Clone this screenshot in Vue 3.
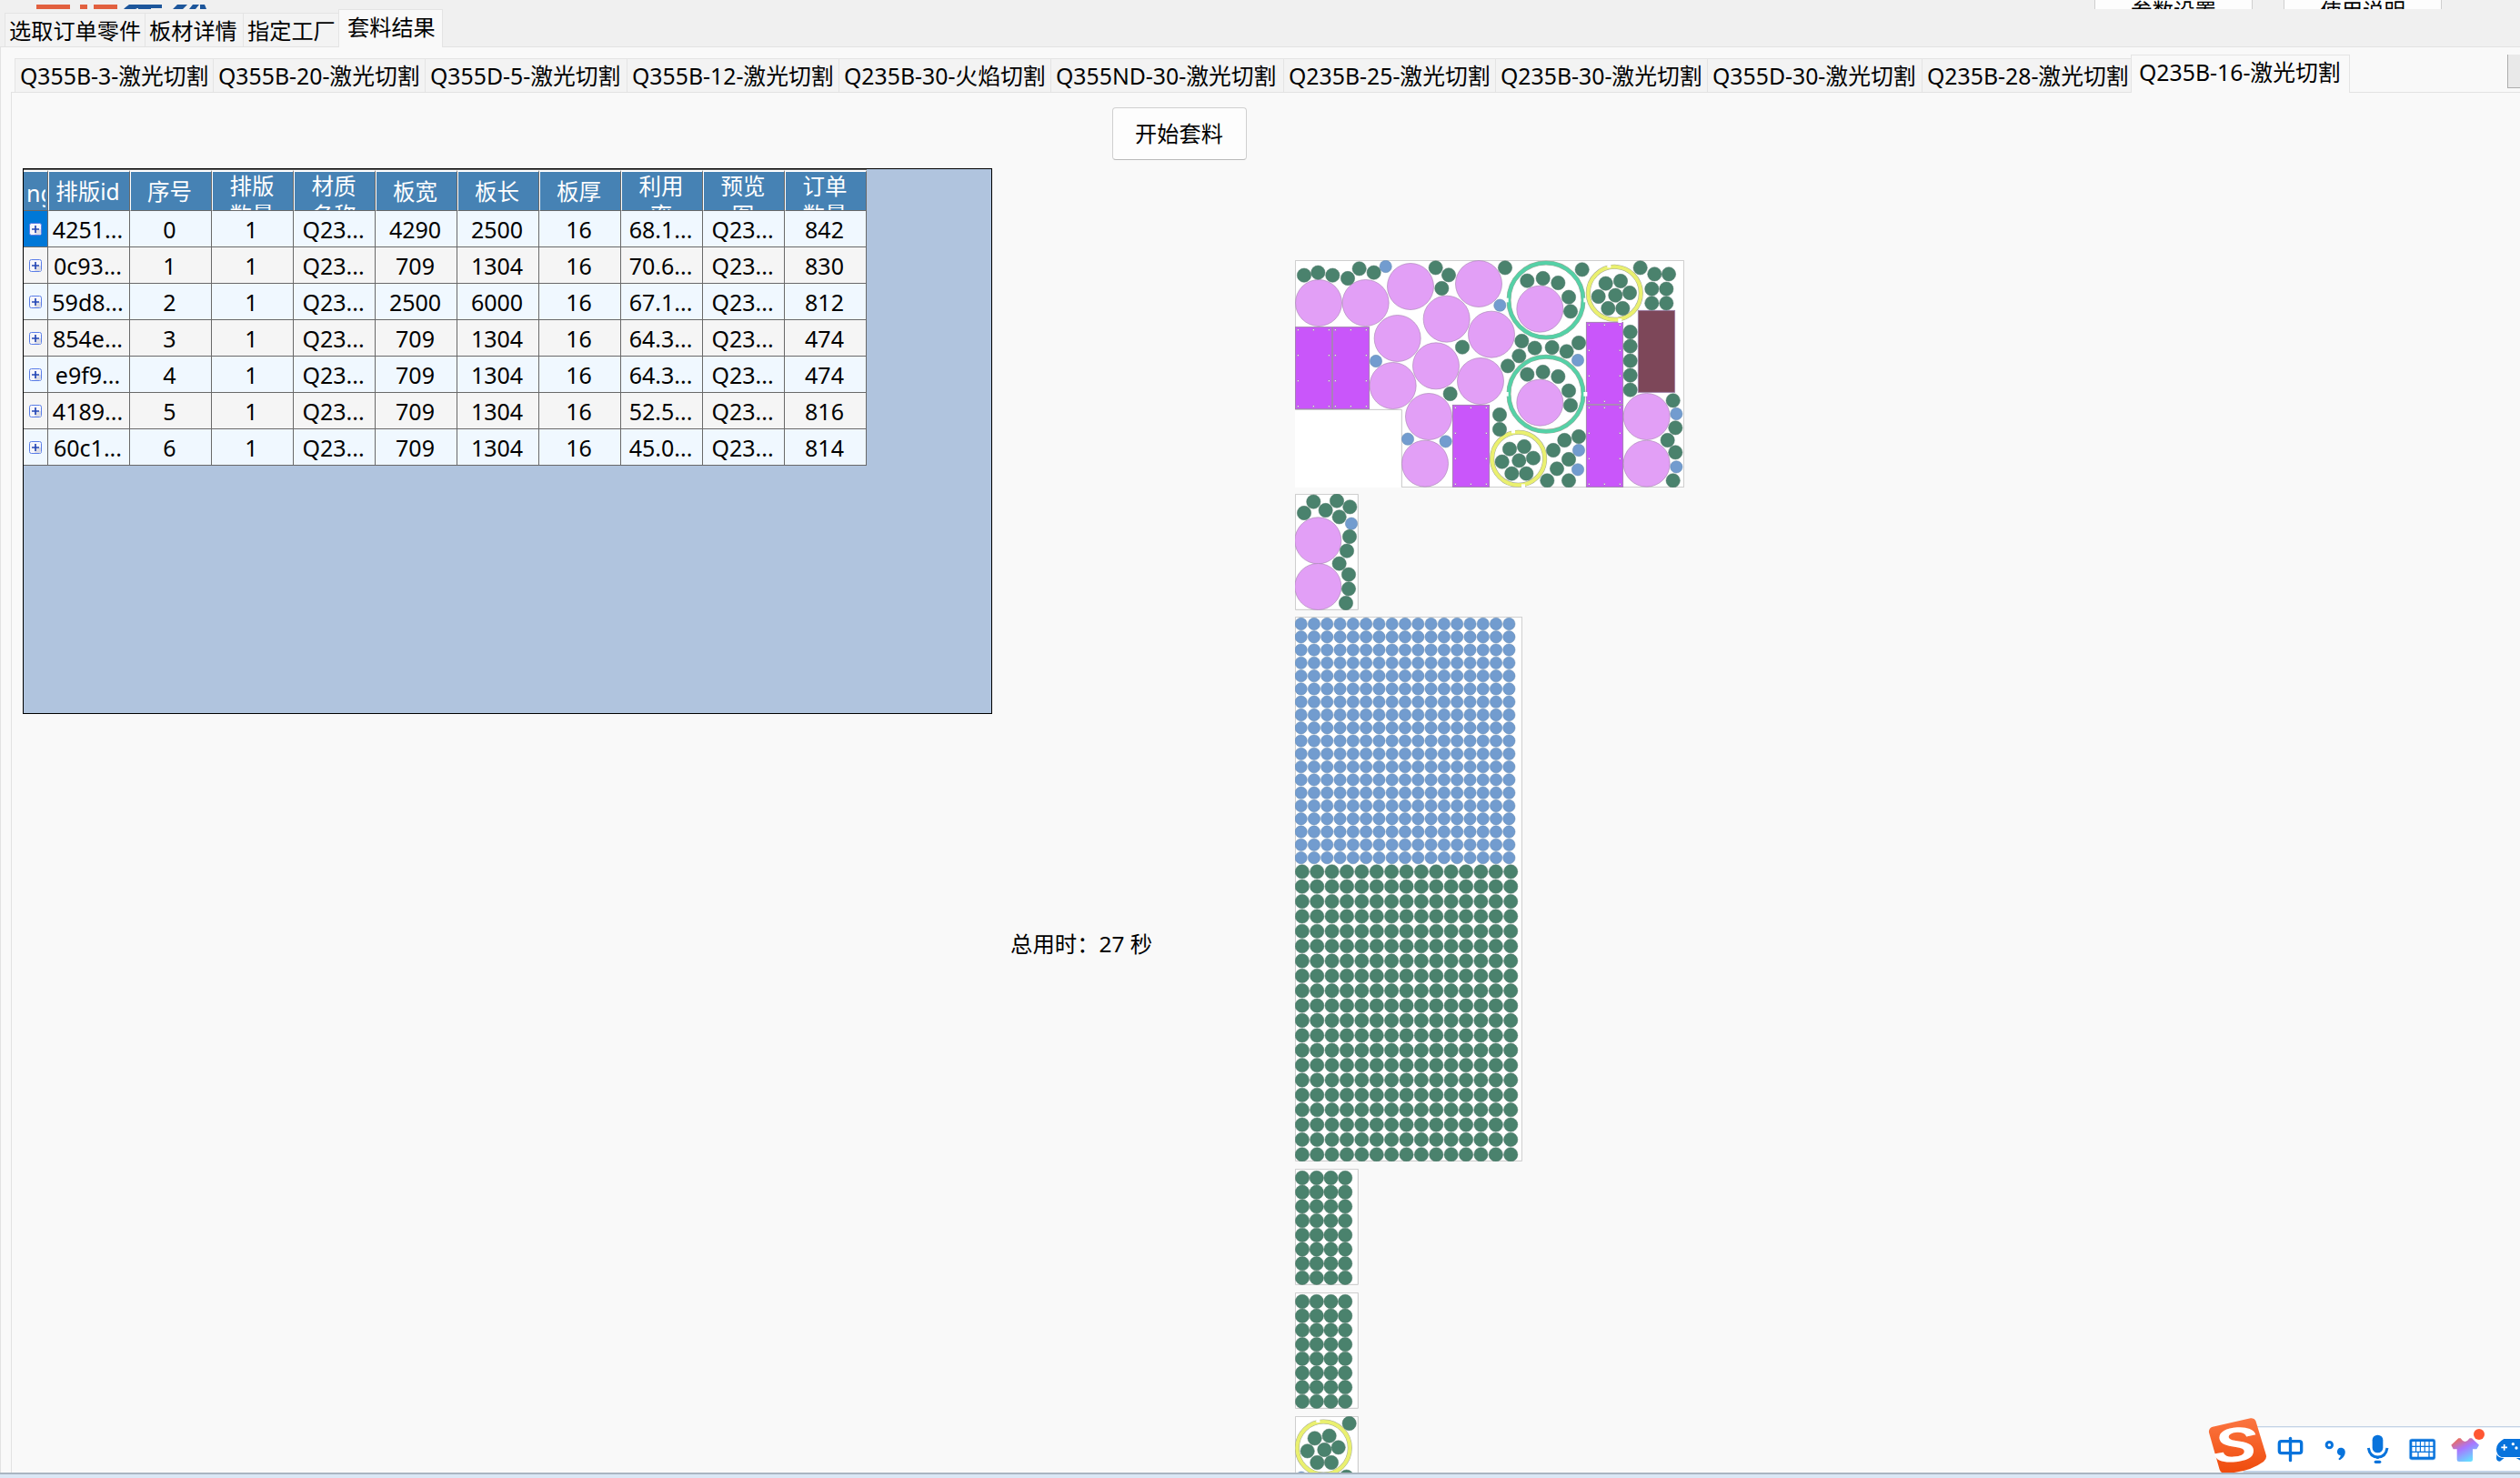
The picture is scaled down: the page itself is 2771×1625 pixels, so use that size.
<script setup>
const mainTabs = [
  { label: '选取订单零件', width: 154 },
  { label: '板材详情', width: 108 },
  { label: '指定工厂', width: 105 },
  { label: '套料结果', width: 115, active: true },
]

const materialTabs = [
  { label: 'Q355B-3-激光切割', width: 218 },
  { label: 'Q355B-20-激光切割', width: 233 },
  { label: 'Q355D-5-激光切割', width: 222 },
  { label: 'Q355B-12-激光切割', width: 233 },
  { label: 'Q235B-30-火焰切割', width: 233 },
  { label: 'Q355ND-30-激光切割', width: 256 },
  { label: 'Q235B-25-激光切割', width: 233 },
  { label: 'Q235B-30-激光切割', width: 233 },
  { label: 'Q355D-30-激光切割', width: 236 },
  { label: 'Q235B-28-激光切割', width: 230 },
  { label: 'Q235B-16-激光切割', width: 241, active: true },
]

const headers = ['排版id', '序号', '排版数量', '材质名称', '板宽', '板长', '板厚', '利用率', '预览图', '订单数量']
const rows = [
  ['4251...', '0', '1', 'Q23...', '4290', '2500', '16', '68.1...', 'Q23...', '842'],
  ['0c93...', '1', '1', 'Q23...', '709', '1304', '16', '70.6...', 'Q23...', '830'],
  ['59d8...', '2', '1', 'Q23...', '2500', '6000', '16', '67.1...', 'Q23...', '812'],
  ['854e...', '3', '1', 'Q23...', '709', '1304', '16', '64.3...', 'Q23...', '474'],
  ['e9f9...', '4', '1', 'Q23...', '709', '1304', '16', '64.3...', 'Q23...', '474'],
  ['4189...', '5', '1', 'Q23...', '709', '1304', '16', '52.5...', 'Q23...', '816'],
  ['60c1...', '6', '1', 'Q23...', '709', '1304', '16', '45.0...', 'Q23...', '814'],
]

// Part geometry is stored in plate units, three units to a pixel.
const shift = (points, dx, dy) => points.map(([x, y]) => [x + dx, y + dy])

function grid(cols, count, x0, y0, dx, dy) {
  const points = []
  for (let r = 0; r < count; r++) {
    for (let c = 0; c < cols; c++) points.push([x0 + c * dx, y0 + r * dy])
  }
  return points
}

const block = (height) => ({
  w: 209, h: height, outline: `1,1 208,1 208,${height - 2} 1,${height - 2}`,
  green: grid(4, 8, 24, 30, 47.2, 47.1), blue: [], pink: [], rings: [], sheets: [],
})

const plates = [
  {
    w: 1284, h: 750,
    outline: '1,1 1283,1 1283,749 352,749 352,493 1,493',
    green: [
      ...shift([[72, 83], [118, 74], [166, 83], [216, 93], [254, 61], [302, 74], [506, 58], [549, 82], [526, 126], [594, 320], [554, 474]], -42, -33),
      ...shift([
        [75, 58], [148, 101], [200, 93], [250, 108], [285, 155], [291, 202], [329, 64], [521, 58],
        [568, 79], [615, 79], [559, 128], [607, 128], [559, 175], [607, 175],
        [407, 110], [456, 102], [383, 153], [439, 149], [486, 141], [415, 192], [463, 192],
        [130, 300], [173, 323], [230, 321], [278, 334], [318, 306], [121, 349], [84, 382],
        [148, 410], [200, 402], [250, 417], [285, 464], [291, 512],
        [488, 270], [488, 317], [488, 365], [488, 413], [488, 461],
        [57, 543], [57, 591], [90, 656], [138, 648], [65, 698], [121, 694], [168, 686], [97, 737], [145, 737],
        [234, 660], [271, 627], [318, 615], [285, 690], [246, 721], [214, 760], [285, 760],
        [629, 496], [637, 586], [611, 627], [637, 667], [629, 760],
      ], 618, -33),
    ],
    blue: [
      ...shift([[341, 54], [309, 366], [414, 623], [539, 631]], -42, -33),
      ...shift([[58, 182], [315, 363], [318, 660], [315, 724], [640, 540], [640, 715]], 618, -33),
    ],
    pink: [
      ...shift([[120, 174], [275, 174], [423, 120], [648, 111], [542, 227], [380, 291], [690, 278], [507, 382], [365, 447], [654, 432], [483, 549], [471, 704]], -42, -33),
      ...shift([[190, 194], [190, 503], [542, 549], [542, 704]], 618, -33),
    ],
    rings: [
      { x: 828, y: 132, r: 123, color: '#55d1a7', cuts: [[-130, 0], [130, 0]] },
      { x: 828, y: 442, r: 123, color: '#55d1a7', cuts: [[-130, 0], [130, 0]] },
      { x: 1054, y: 109, r: 87, color: '#eaf06f', cuts: [[-18, -91], [18, 91]] },
      { x: 737, y: 655, r: 87, color: '#eaf06f', cuts: [[-17, -91], [16, 91]] },
    ],
    sheets: [
      { x: 1, y: 221 }, { x: 124, y: 221 }, { x: 520, y: 478 },
      { x: 961, y: 205 }, { x: 961, y: 478 }, { x: 1132, y: 166, plain: true },
    ],
  },
  {
    w: 209, h: 384, outline: '1,1 208,1 208,382 1,382',
    green: shift([[72, 88], [103, 51], [143, 79], [180, 48], [223, 68], [188, 101], [222, 166], [213, 213], [188, 255], [219, 291], [219, 338], [210, 385]], -42, -25),
    blue: [[186, 98]], pink: [[76, 154], [76, 306]], rings: [], sheets: [],
  },
  {
    w: 750, h: 1797, outline: '1,1 749,1 749,1795 1,1795',
    green: grid(15, 20, 23.5, 841, 49.15, 49.1),
    blue: grid(17, 19, 20, 24, 42.88, 42.85), pink: [], rings: [], sheets: [],
  },
  block(384),
  block(384),
  {
    w: 209, h: 384, outline: '1,1 208,1 208,382 1,382',
    green: shift([[221, 555], [107, 604], [155, 596], [83, 646], [139, 642], [185, 634], [115, 684], [162, 684], [212, 731]], -42, -531),
    blue: [[21, 203]], pink: [],
    rings: [{ x: 94, y: 105, r: 87, color: '#eaf06f', cuts: [[-18, -91]] }], sheets: [],
  },
]

const holes = [[9, 9], [60, 9], [111, 9], [9, 93], [111, 93], [9, 177], [111, 177], [9, 261], [60, 261], [111, 261]]
</script>

<template>
  <div class="window">
    <header class="topbar">
      <svg class="brand" width="200" height="5" viewBox="0 0 200 5">
        <g fill="#e2603f">
          <rect x="0" width="37" height="5" /><rect x="48" width="8" height="5" /><rect x="63" width="26" height="5" />
        </g>
        <g fill="#1d569b">
          <path d="M102 0h36v4h-27l-2 1h-13l2-2z" /><rect x="112" y="3" width="14" height="2" />
          <path d="M155 0h11l-5 5h-11zM172 0h7l-4 5h-7zM180 0h5l2 5h-7z" />
        </g>
      </svg>
      <div class="tools"><div class="tool">参数设置</div><div class="tool">使用说明</div></div>
    </header>

    <nav class="tabs main-tabs">
      <div v-for="t in mainTabs" :key="t.label" class="tab" :class="{ active: t.active }" :style="{ width: t.width + 'px' }">{{ t.label }}</div>
    </nav>

    <section class="page">
      <nav class="tabs material-tabs">
        <div v-for="t in materialTabs" :key="t.label" class="tab" :class="{ active: t.active }" :style="{ width: t.width + 'px' }">{{ t.label }}</div>
        <div class="scroller"></div>
      </nav>

      <div class="content">
        <div class="left">
          <button class="start">开始套料</button>
          <div class="datagrid">
            <div class="row head">
              <div class="expander"><span>ng</span></div>
              <div v-for="h in headers" :key="h" class="cell" :class="{ tall: h.length > 2 && h !== '排版id' }"><span>{{ h }}</span></div>
            </div>
            <div v-for="(r, i) in rows" :key="i" class="row" :class="{ odd: i % 2 }">
              <div class="expander" :class="{ selected: i === 0 }">
                <svg width="14" height="14" viewBox="0 0 14 14">
                  <rect x=".5" y=".5" width="13" height="13" rx="2" fill="#f6f6fb" stroke="#5b7ee8" />
                  <path d="M8 7h5v6H6z" fill="#dcdce4" /><path d="M3 7h8M7 3v8" stroke="#2547b5" stroke-width="1.7" />
                </svg>
              </div>
              <div v-for="(v, c) in r" :key="c" class="cell">{{ v }}</div>
            </div>
          </div>
          <div class="elapsed">总用时：27 秒</div>
        </div>

        <div class="plates">
          <svg v-for="(p, i) in plates" :key="i" :width="p.w / 3" :height="p.h / 3" :viewBox="`0 0 ${p.w} ${p.h}`">
            <rect :width="p.w" :height="p.h" fill="#fff" />
            <polygon :points="p.outline" fill="none" stroke="#c6c6c6" stroke-width="3" />
            <g v-for="(s, k) in p.sheets" :key="'s' + k" :transform="`translate(${s.x} ${s.y})`">
              <rect width="121" height="270" :fill="s.plain ? '#7d4759' : '#c956fa'" stroke="#9a7ba6" stroke-width="2.5" />
              <template v-if="!s.plain">
                <circle v-for="(h, n) in holes" :key="n" :cx="h[0]" :cy="h[1]" r="3" fill="#fff" stroke="#8a5aa5" stroke-width="1.5" />
              </template>
            </g>
            <g v-for="(r, k) in p.rings" :key="'r' + k">
              <circle :cx="r.x" :cy="r.y" :r="r.r" fill="none" stroke="#a3a89a" stroke-width="15" />
              <circle :cx="r.x" :cy="r.y" :r="r.r" fill="none" :stroke="r.color" stroke-width="12" />
              <rect v-for="(c, n) in r.cuts" :key="n" :x="r.x + c[0] - 6" :y="r.y + c[1] - 7" width="12" height="14" fill="#fff" />
            </g>
            <circle v-for="(c, k) in p.pink" :key="'p' + k" class="pink" :cx="c[0]" :cy="c[1]" r="76.5" />
            <circle v-for="(c, k) in p.blue" :key="'b' + k" class="blue" :cx="c[0]" :cy="c[1]" r="20" />
            <circle v-for="(c, k) in p.green" :key="'g' + k" class="green" :cx="c[0]" :cy="c[1]" r="23" />
          </svg>
        </div>
      </div>
    </section>

    <footer class="desktop-edge"></footer>

    <svg class="ime" width="371" height="79" viewBox="0 0 1113 237">
      <defs>
        <linearGradient id="badge" x1="0" y1="0" x2="0" y2="1"><stop offset="0" stop-color="#fb7541" /><stop offset="1" stop-color="#ef4b0c" /></linearGradient>
        <linearGradient id="shirt" x1="0" y1="0" x2=".6" y2="1"><stop offset="0" stop-color="#ff6a2b" /><stop offset=".5" stop-color="#a876ff" /><stop offset="1" stop-color="#67dcff" /></linearGradient>
      </defs>
      <rect x="200" y="84" width="920" height="153" fill="#c3d3e6" />
      <rect x="200" y="88" width="920" height="143" fill="#fff" />
      <path d="M99 86L224 58q12-2 17 8l34 112q4 14-8 23q-50 37-129 38q-12 0-16-12L87 105q-2-14 12-19z" fill="url(#badge)" />
      <text transform="translate(103 204) rotate(-3) scale(1.36 1)" font-size="160" class="badge-letter" fill="#fff">S</text>
      <g fill="none" stroke="#0873dc" stroke-width="10">
        <rect x="319" y="134" width="73" height="39" rx="7" /><path d="M355.500 124v73" stroke-linecap="round" />
        <circle cx="484" cy="146" r="9.500" stroke-width="9" />
        <path d="M613 156q5 30 31 30t31-30M643 186v6" stroke-width="9" />
        <path d="M637 202h13" stroke-linecap="round" />
      </g>
      <path d="M522 155c20 0 20 30-5 41l-3-4q8-6 7-12c-15 0-15-25 1-25z" fill="#0873dc" />
      <rect x="626" y="113" width="35" height="59" rx="17" fill="#0873dc" />
      <rect x="748" y="126" width="86" height="69" rx="8" fill="#0873dc" stroke="#8ec1f1" stroke-width="2" />
      <g fill="#fff">
        <rect v-for="n in 10" :key="n" :x="757 + ((n - 1) % 5) * 14.500" :y="135 + Math.floor((n - 1) / 5) * 18" width="11" height="14" />
        <rect x="757" y="171" width="18" height="14" /><rect x="779" y="171" width="32" height="14" /><rect x="815" y="171" width="11" height="14" />
      </g>
      <path d="M886 146l24-22h7q14 22 30 0h7l24 22-8 14h-13v35q0 6-7 6h-38q-7 0-7-6v-35h-12z" fill="url(#shirt)" />
      <circle cx="978" cy="111" r="18" fill="#ff5733" />
      <path d="M1060 126h70v60h-78q-17-6-17-26t25-34z" fill="#0873dc" />
      <path d="M1036 177q5 12 25 12l-14 11q-12 0-12-12zM1100 189h20v12z" fill="#0873dc" />
      <path d="M1051 154h20M1061 144v20" stroke="#fff" stroke-width="5" /><circle cx="1090" cy="143" r="5" fill="#fff" /><circle cx="1101" cy="156" r="5" fill="#fff" />
    </svg>
  </div>
</template>

<style>
body { margin: 0; }
</style>

<style scoped>
* { box-sizing: border-box; }
.window {
  position: relative;
  display: flex;
  flex-direction: column;
  width: 2771px;
  height: 1625px;
  overflow: hidden;
  background: #f0f0f0;
  color: #000;
  font: 24.8px/32px "Noto Sans", "Noto Sans CJK SC", sans-serif;
}
.topbar {
  display: flex;
  justify-content: space-between;
  height: 10px;
  flex: none;
  overflow: hidden;
  padding: 0 86px 0 40px;
}
.brand { margin-top: 5px; }
.tools { display: flex; gap: 34px; }
.tool {
  width: 174px;
  height: 40px;
  border: solid #cfcfcf;
  border-width: 0 1px;
  background: #fdfdfd;
  text-align: center;
  font-size: 23.5px;
  line-height: 25px;
}
.tabs { display: flex; align-items: flex-end; flex: none; }
.tab {
  flex: none;
  height: 37px;
  padding-left: 6px;
  border: 1px solid #e4e4e4;
  border-width: 1px 0 0 1px;
  background: #f3f3f3;
  white-space: nowrap;
}
.tab.active { background: #f9f9f9; border-right-width: 1px; padding-left: 9px; }
.main-tabs { height: 41px; padding-left: 5px; }
.main-tabs .tab { padding-left: 4px; line-height: 37px; font-size: 24.2px; }
.main-tabs .tab.active { height: 42px; margin-bottom: -1px; padding-left: 9px; z-index: 1; }
.page {
  display: flex;
  flex-direction: column;
  height: 1568px;
  border: 1px solid #e2e2e2;
  border-width: 1px 0 0 1px;
  background: #f9f9f9;
}
.material-tabs { height: 49px; padding-left: 15px; }
.material-tabs .tab { padding-left: 5px; line-height: 37px; }
.material-tabs .tab.active { height: 42px; margin-bottom: -1px; padding-left: 8px; z-index: 1; }
.scroller {
  width: 14px;
  height: 37px;
  margin: 0 0 4px auto;
  border: solid #adadad;
  border-width: 0 0 1px 1px;
  background: #e9e9e9;
}
.content {
  display: flex;
  flex: 1;
  margin-left: 11px;
  border: 1px solid #e2e2e2;
  border-width: 1px 0 0 1px;
  min-height: 0;
  overflow: hidden;
}
.left { display: flex; flex-direction: column; width: 1411px; flex: none; }
.start {
  width: 148px;
  height: 58px;
  margin: 16px 0 0 1210px;
  padding: 0 1px 0 0;
  border: 1px solid #d0d0d0;
  border-bottom-color: #b9b9b9;
  border-radius: 4px;
  background: #fdfdfd;
  color: #000;
  font: inherit;
  font-size: 24.2px;
}
.datagrid {
  width: 1066px;
  height: 600px;
  margin: 9px 0 0 12px;
  border: 1px solid #000;
  background: #b0c4de;
  font-size: 25px;
}
.row { display: flex; width: 927px; height: 40px; background: #f0f8ff; }
.row.odd { background: #f5f5f5; }
.cell, .expander { border: solid #696969; border-width: 0 1px 1px 0; overflow: hidden; }
.cell { width: 90px; padding-right: 2px; text-align: center; line-height: 40px; }
.expander { display: flex; align-items: center; justify-content: center; width: 27px; padding-right: 1px; }
.expander.selected { background: #0078d7; }
.row.head { height: 46px; border-top: 1px solid #696969; background: #4682b4; color: #fff; }
.head .cell { border-left: 1px solid #fff; border-top: 2px solid #fff; padding-right: 3px; line-height: 44px; font-size: 24.500px; }
.head .cell span { display: block; }
.head .tall { padding: 0 20px 0 18px; line-height: 32px; }
.head .tall span { margin: 0 -1px; word-break: break-all; }
.head .expander { justify-content: flex-start; border-top: 2px solid #fff; padding: 3px 2px 0 3px; }
.head .expander span { overflow: hidden; }
.elapsed { margin: 237px 0 0 1098px; font-size: 24.4px; }
.plates { display: flex; flex-direction: column; align-items: flex-start; gap: 8px; padding-top: 184px; }
.plates svg { display: block; flex: none; }
.plates svg:first-child { margin-bottom: -1px; }
.plates svg:nth-child(2) { margin-bottom: -1px; }
.pink { fill: #e29ff6; stroke: #aa86b6; stroke-width: 2; }
.blue { fill: #729ccf; stroke: #6588ae; stroke-width: 1.5; }
.green { fill: #4a826d; stroke: #4c7566; stroke-width: 1.5; }
.desktop-edge { flex: none; height: 6px; border-top: 2px solid #a9b5c1; background: #dae7f5; }
.ime { position: absolute; left: 2400px; top: 1540px; }
.badge-letter { font-family: "Liberation Sans", sans-serif; font-weight: 700; font-style: italic; }
</style>
